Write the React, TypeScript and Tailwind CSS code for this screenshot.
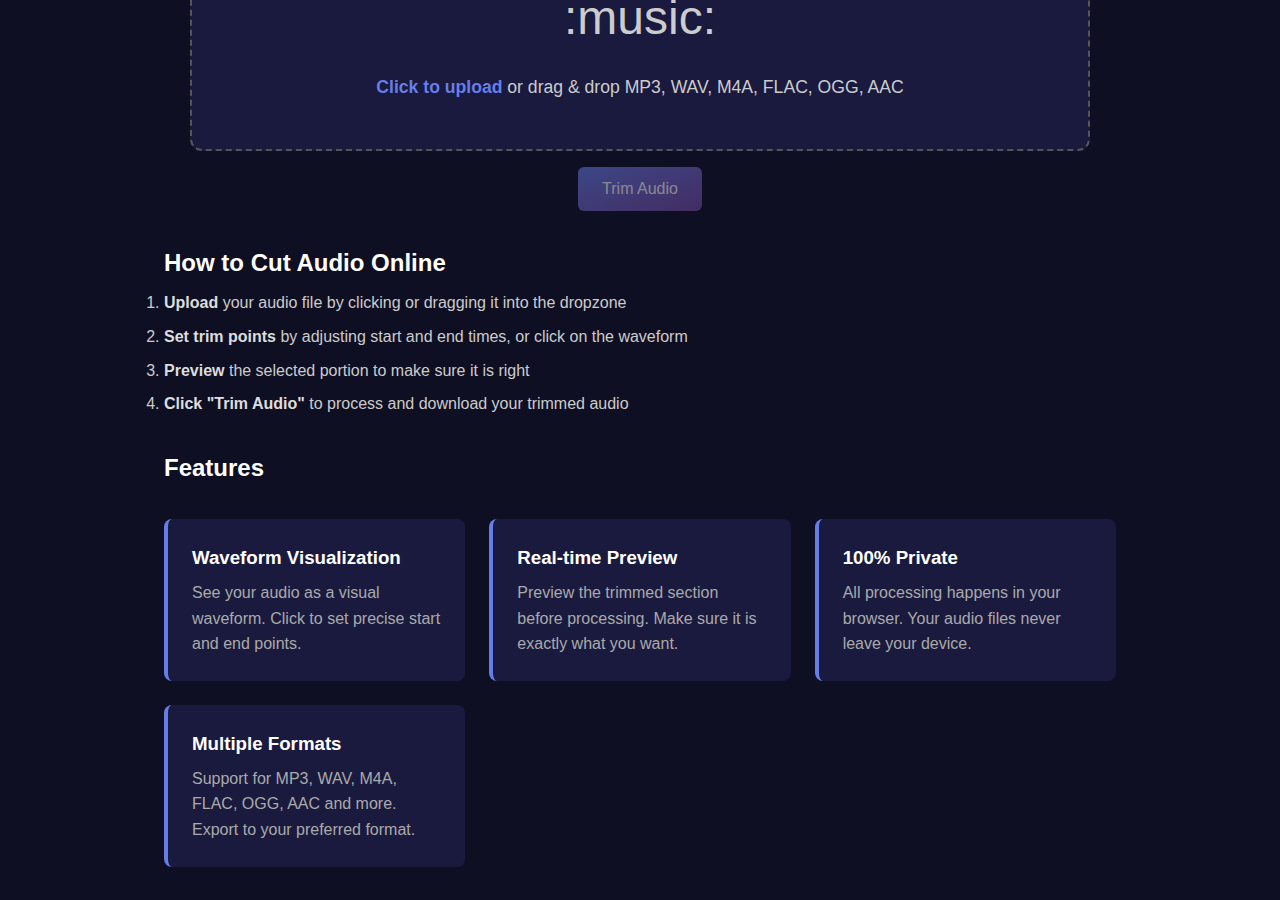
import React from 'react';

const features = [
  {
    title: 'Waveform Visualization',
    text: 'See your audio as a visual waveform. Click to set precise start and end points.'
  },
  {
    title: 'Real-time Preview',
    text: 'Preview the trimmed section before processing. Make sure it is exactly what you want.'
  },
  {
    title: '100% Private',
    text: 'All processing happens in your browser. Your audio files never leave your device.'
  },
  {
    title: 'Multiple Formats',
    text: 'Support for MP3, WAV, M4A, FLAC, OGG, AAC and more. Export to your preferred format.'
  }
];

const steps = [
  { bold: 'Upload', rest: ' your audio file by clicking or dragging it into the dropzone' },
  { bold: 'Set trim points', rest: ' by adjusting start and end times, or click on the waveform' },
  { bold: 'Preview', rest: ' the selected portion to make sure it is right' },
  { bold: 'Click "Trim Audio"', rest: ' to process and download your trimmed audio' }
];

export default function App() {
  return <div className="min-h-[900px] bg-[#0f0f23] text-[#cccccc] font-['Liberation_Sans',Arial,sans-serif] leading-[1.6] overflow-hidden">
      <div className="max-w-[1000px] mx-auto px-6 pb-8">
        <div className="max-w-[900px] mx-auto -mt-[70px]">
          <div className="border-2 border-dashed border-[#555555] rounded-xl bg-[#1a1a3e] p-12 text-center">
            <div className="text-5xl leading-[1.6] mb-4 text-[#cccccc]">:music:</div>
            <p className="text-[17.6px] leading-[1.6]">
              <span className="text-[#667eea] font-bold">Click to upload</span> or drag &amp; drop MP3, WAV, M4A, FLAC, OGG, AAC
            </p>
          </div>
        </div>

        <div className="flex justify-center mt-4">
          <button disabled className="px-6 py-[10px] text-base leading-[1.5] rounded-md text-white bg-gradient-to-br from-[#667eea] to-[#764ba2] opacity-50">
            Trim Audio
          </button>
        </div>

        <section className="mt-[33px]">
          <h2 className="text-2xl leading-[1.6] font-bold text-white mb-2">How to Cut Audio Online</h2>
          <ol className="list-decimal">
            {steps.map(s => <li key={s.bold} className="mb-2">
                <strong className="text-[#dddddd]">{s.bold}</strong>
                {s.rest}
              </li>)}
          </ol>
        </section>

        <section className="mt-8">
          <h2 className="text-2xl leading-[1.6] font-bold text-white mb-8">Features</h2>
          <div className="grid grid-cols-3 gap-6">
            {features.map(f => <div key={f.title} className="bg-[#1a1a3e] rounded-lg border-l-4 border-[#667eea] p-6">
                <h3 className="text-[18.7px] leading-[1.6] font-bold text-white mb-[7px]">{f.title}</h3>
                <p className="text-[#aaaaaa]">{f.text}</p>
              </div>)}
          </div>
        </section>
      </div>
    </div>;
}
